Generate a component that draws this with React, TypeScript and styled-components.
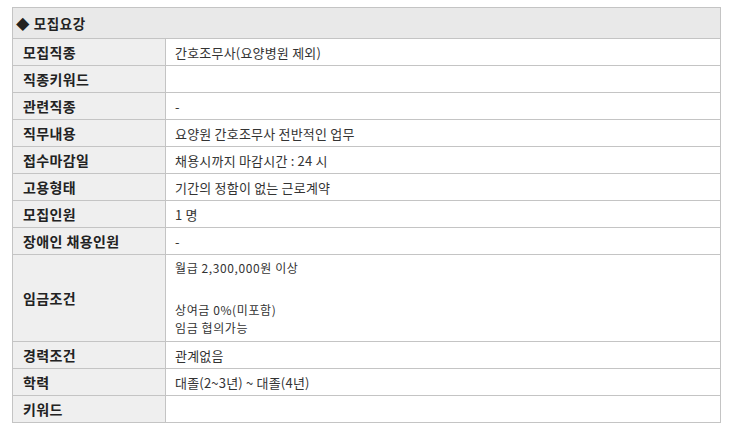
import React from "react";
import styled, { createGlobalStyle } from "styled-components";

const Global = createGlobalStyle`
  html, body { margin: 0; padding: 0; background: #fff; }
  body { font-family: "Noto Sans CJK KR", "Noto Sans", sans-serif; font-size: 13px; color: #333; }
`;

const Page = styled.div`
  padding: 7px 11px 0 12px;
`;

const Table = styled.table`
  width: 708px;
  border-collapse: collapse;
  table-layout: fixed;
  border: 1px solid #c4c4c4;
`;

const LabelCol = styled.col`
  width: 153px;
`;

const ValueCol = styled.col`
  width: 555px;
`;

const HeaderCell = styled.th`
  height: 30px;
  padding: 0 0 0 3px;
  background: #e9e9e9;
  border: 1px solid #c4c4c4;
  text-align: left;
  font-weight: 700;
  font-size: 13.5px;
  letter-spacing: 0.6px;
  color: #222;
`;

const LabelCell = styled.th`
  height: 26px;
  padding: 0 0 0 10px;
  background: #efefef;
  border: 1px solid #c4c4c4;
  text-align: left;
  font-weight: 700;
  font-size: 14px;
  letter-spacing: 0.4px;
  color: #222;
  vertical-align: middle;
  white-space: nowrap;
`;

const ValueCell = styled.td<{ $tall?: boolean }>`
  height: 26px;
  padding: ${(p) => (p.$tall ? "4px 0 5px 9px" : "0 0 0 9px")};
  border: 1px solid #c4c4c4;
  background: #fff;
  color: #333;
  font-size: 13px;
  letter-spacing: 0.2px;
  line-height: 17px;
  vertical-align: middle;
`;

const Line = styled.div<{ $gap?: number; $h?: number }>`
  height: ${(p) => p.$h ?? 17}px;
  line-height: ${(p) => p.$h ?? 17}px;
  font-size: 12px;
  letter-spacing: 0.6px;
  margin-bottom: ${(p) => p.$gap ?? 0}px;
`;

type Row = { label: string; value: React.ReactNode; tall?: boolean };

const rows: Row[] = [
  { label: "모집직종", value: "간호조무사(요양병원 제외)" },
  { label: "직종키워드", value: "" },
  { label: "관련직종", value: "-" },
  { label: "직무내용", value: "요양원 간호조무사 전반적인 업무" },
  { label: "접수마감일", value: "채용시까지 마감시간 : 24 시" },
  { label: "고용형태", value: "기간의 정함이 없는 근로계약" },
  { label: "모집인원", value: "1 명" },
  { label: "장애인 채용인원", value: "-" },
  {
    label: "임금조건",
    tall: true,
    value: (
      <>
        <Line $gap={8}>월급 2,300,000원 이상</Line>
        <Line />
        <Line $h={17.5}>상여금 0%(미포함)</Line>
        <Line $h={17.5}>임금 협의가능</Line>
      </>
    ),
  },
  { label: "경력조건", value: "관계없음" },
  { label: "학력", value: "대졸(2~3년) ~ 대졸(4년)" },
  { label: "키워드", value: "" },
];

export default function App() {
  return (
    <>
      <Global />
      <Page>
        <Table>
          <colgroup>
            <LabelCol />
            <ValueCol />
          </colgroup>
          <thead>
            <tr>
              <HeaderCell colSpan={2}>◆ 모집요강</HeaderCell>
            </tr>
          </thead>
          <tbody>
            {rows.map((r) => (
              <tr key={r.label}>
                <LabelCell>{r.label}</LabelCell>
                <ValueCell $tall={r.tall}>{r.value}</ValueCell>
              </tr>
            ))}
          </tbody>
        </Table>
      </Page>
    </>
  );
}
